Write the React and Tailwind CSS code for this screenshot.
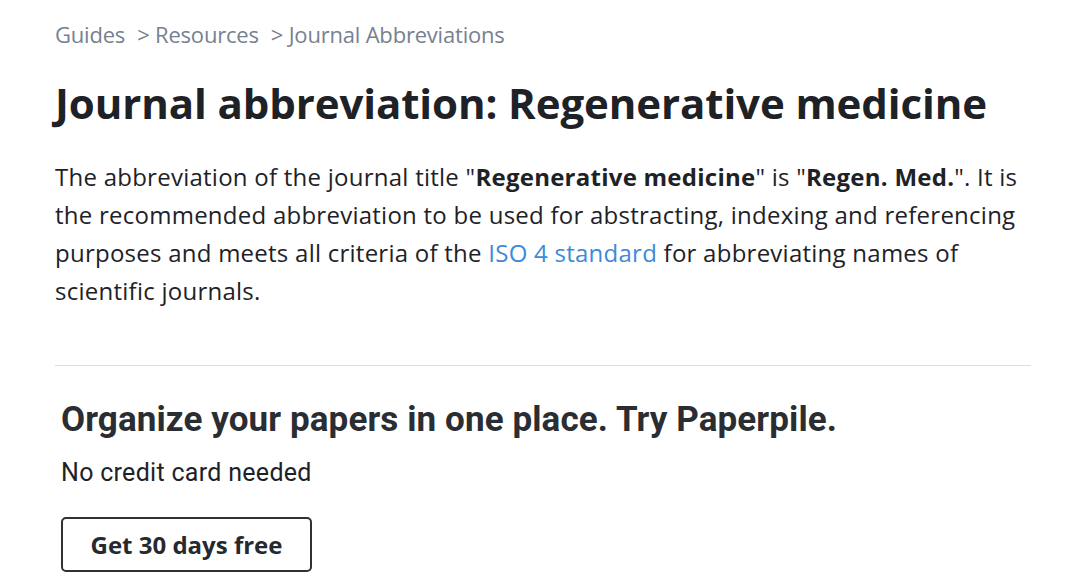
import React from "react";

const App = () => {
  return (
    <div
      className="min-h-[579px] bg-white pl-[55px] pr-[49px] pt-[19px] text-[#1e2227]"
      style={{ fontFamily: "'Open Sans', 'Noto Sans', sans-serif" }}
    >
      <nav className="text-[22px] leading-[30px] tracking-[-0.2px] text-[#77818f]">
        <span>Guides</span>
        <span className="ml-[12px]">&gt; Resources</span>
        <span className="ml-[12px]">&gt; Journal Abbreviations</span>
      </nav>

      <h1 className="mt-[29px] text-[42px] font-bold leading-[50px] tracking-[-0.1px]">
        Journal abbreviation: Regenerative medicine
      </h1>

      <p className="mt-[30px] text-[24px] leading-[38px] tracking-[0.25px]">
        The abbreviation of the journal title "<b>Regenerative medicine</b>" is "
        <b>Regen. Med.</b>". It is the recommended abbreviation to be used for
        abstracting, indexing and referencing purposes and meets all criteria of
        the{" "}
        <a href="#" className="text-[#3d8ad8]">
          ISO 4 standard
        </a>{" "}
        for abbreviating names of scientific journals.
      </p>

      <hr className="mt-[55px] border-t border-[#dedede]" />

      <section className="pl-[6px] pt-[34px]" style={{ fontFamily: "Roboto, 'Open Sans', sans-serif" }}>
        <h2 className="text-[35px] font-bold leading-[40px] tracking-[0.1px] text-[#2a2d31]">
          Organize your papers in one place. Try Paperpile.
        </h2>
        <p className="mt-[18px] text-[25px] leading-[30px] tracking-[0.3px]">No credit card needed</p>
        <button
          className="mt-[29px] flex h-[55px] w-[251px] items-center justify-center rounded-[5px] border-2 border-[#2e3135] text-[24px] font-bold text-[#26292d]"
          style={{ fontFamily: "'Open Sans', sans-serif" }}
        >
          Get 30 days free
        </button>
      </section>
    </div>
  );
};

export default App;
